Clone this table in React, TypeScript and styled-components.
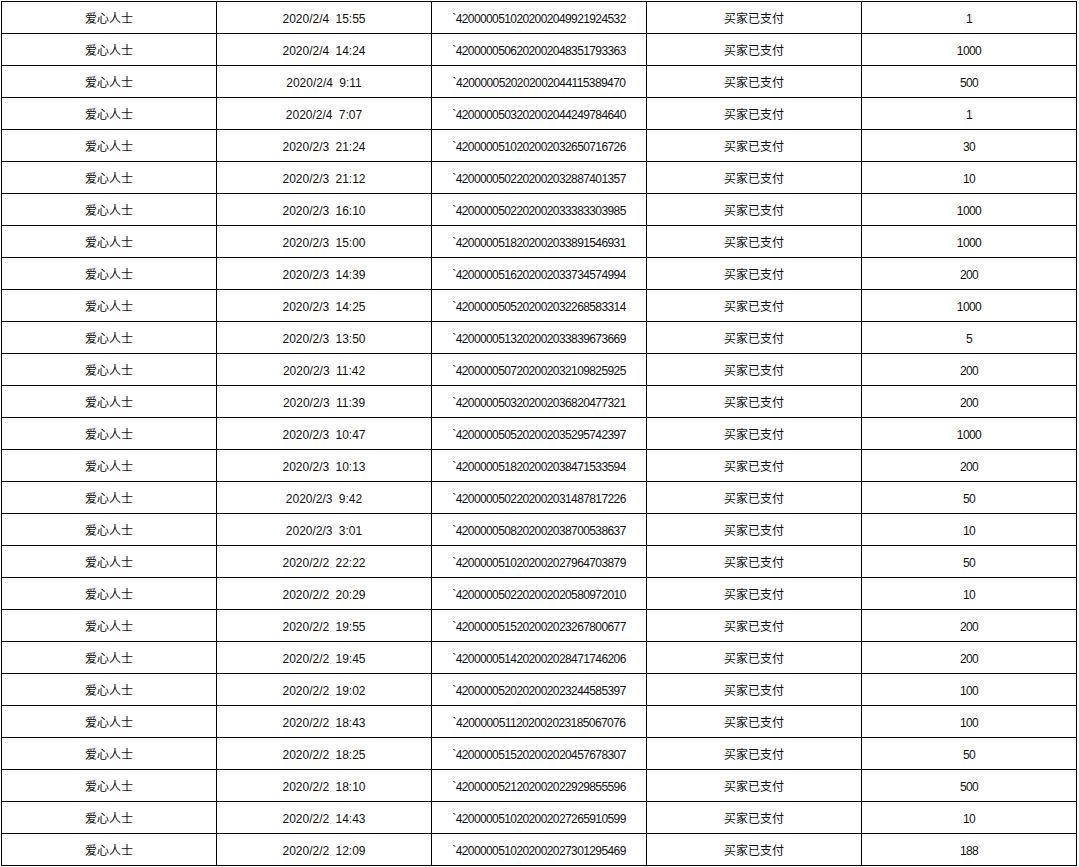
import React from "react";
import styled, { createGlobalStyle } from "styled-components";

const GlobalStyle = createGlobalStyle`
  html, body {
    margin: 0;
    padding: 0;
    background: #ffffff;
  }
`;

const Page = styled.div`
  padding: 1px 0 0 1px;
`;

const Table = styled.table`
  width: 1076px;
  table-layout: fixed;
  border-collapse: collapse;
  font-family: "Liberation Sans", "Noto Sans CJK SC", sans-serif;
  font-size: 12px;
  color: #111111;
`;

const Row = styled.tr`
  height: 32px;
`;

const Cell = styled.td<{ $tight?: boolean; $wide?: boolean }>`
  width: 20%;
  border: 1px solid #000000;
  padding: 3px 0 0 0;
  line-height: 28px;
  text-align: center;
  vertical-align: top;
  white-space: nowrap;
  letter-spacing: ${(p) => (p.$tight ? "-0.6px" : "0")};
  word-spacing: ${(p) => (p.$wide ? "3px" : "0")};
`;

interface Order {
  time: string;
  id: string;
  amount: string;
}

const orders: Order[] = [
  { time: "2020/2/4 15:55", id: "4200000510202002049921924532", amount: "1" },
  { time: "2020/2/4 14:24", id: "4200000506202002048351793363", amount: "1000" },
  { time: "2020/2/4 9:11", id: "4200000520202002044115389470", amount: "500" },
  { time: "2020/2/4 7:07", id: "4200000503202002044249784640", amount: "1" },
  { time: "2020/2/3 21:24", id: "4200000510202002032650716726", amount: "30" },
  { time: "2020/2/3 21:12", id: "4200000502202002032887401357", amount: "10" },
  { time: "2020/2/3 16:10", id: "4200000502202002033383303985", amount: "1000" },
  { time: "2020/2/3 15:00", id: "4200000518202002033891546931", amount: "1000" },
  { time: "2020/2/3 14:39", id: "4200000516202002033734574994", amount: "200" },
  { time: "2020/2/3 14:25", id: "4200000505202002032268583314", amount: "1000" },
  { time: "2020/2/3 13:50", id: "4200000513202002033839673669", amount: "5" },
  { time: "2020/2/3 11:42", id: "4200000507202002032109825925", amount: "200" },
  { time: "2020/2/3 11:39", id: "4200000503202002036820477321", amount: "200" },
  { time: "2020/2/3 10:47", id: "4200000505202002035295742397", amount: "1000" },
  { time: "2020/2/3 10:13", id: "4200000518202002038471533594", amount: "200" },
  { time: "2020/2/3 9:42", id: "4200000502202002031487817226", amount: "50" },
  { time: "2020/2/3 3:01", id: "4200000508202002038700538637", amount: "10" },
  { time: "2020/2/2 22:22", id: "4200000510202002027964703879", amount: "50" },
  { time: "2020/2/2 20:29", id: "4200000502202002020580972010", amount: "10" },
  { time: "2020/2/2 19:55", id: "4200000515202002023267800677", amount: "200" },
  { time: "2020/2/2 19:45", id: "4200000514202002028471746206", amount: "200" },
  { time: "2020/2/2 19:02", id: "4200000520202002023244585397", amount: "100" },
  { time: "2020/2/2 18:43", id: "4200000511202002023185067076", amount: "100" },
  { time: "2020/2/2 18:25", id: "4200000515202002020457678307", amount: "50" },
  { time: "2020/2/2 18:10", id: "4200000521202002022929855596", amount: "500" },
  { time: "2020/2/2 14:43", id: "4200000510202002027265910599", amount: "10" },
  { time: "2020/2/2 12:09", id: "4200000510202002027301295469", amount: "188" },
];

export default function App() {
  return (
    <Page>
      <GlobalStyle />
      <Table>
        <tbody>
          {orders.map((o) => (
            <Row key={o.id}>
              <Cell>爱心人士</Cell>
              <Cell $wide>{o.time}</Cell>
              <Cell $tight>`{o.id}</Cell>
              <Cell>买家已支付</Cell>
              <Cell $tight>{o.amount}</Cell>
            </Row>
          ))}
        </tbody>
      </Table>
    </Page>
  );
}
